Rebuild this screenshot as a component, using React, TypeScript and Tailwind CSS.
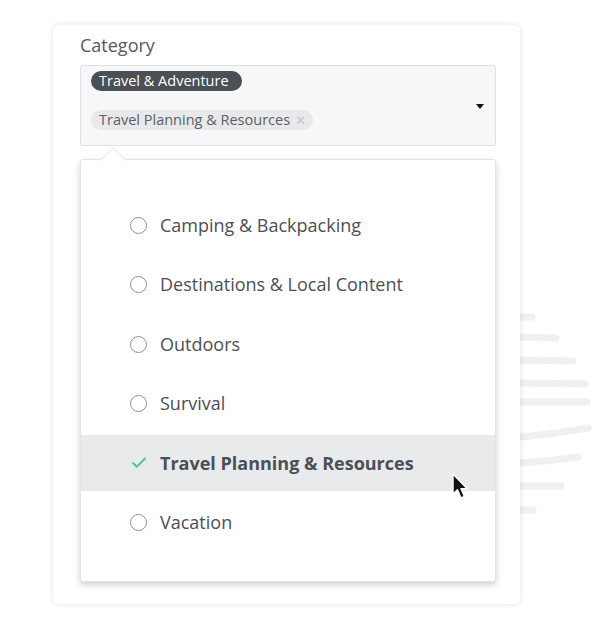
import { Check } from 'lucide-react';

const options = [
  { label: 'Camping & Backpacking', selected: false },
  { label: 'Destinations & Local Content', selected: false },
  { label: 'Outdoors', selected: false },
  { label: 'Survival', selected: false },
  { label: 'Travel Planning & Resources', selected: true },
  { label: 'Vacation', selected: false },
];

// brush strokes peeking out from behind the card
const strokes = [
  'M10 7 L22 7',
  'M10 27 L46 28',
  'M10 50 L63 51',
  'M10 73 L75 74',
  'M10 92 L77 92',
  'M10 127 Q45 124 78 118',
  'M10 153 Q40 151 68 147',
  'M10 176 L51 176',
  'M10 200 L23 200',
];

const Cursor = () => (
  <svg width="18" height="28" viewBox="0 0 18 28" className="absolute left-[370px] top-[313px] z-20">
    <path
      d="M2 1 L2 21 L6.5 16.8 L10 25 L13.4 23.5 L10 15.6 L16 15.6 Z"
      fill="#111"
      stroke="#fff"
      strokeWidth="1.4"
      strokeLinejoin="round"
    />
  </svg>
);

export default function App() {
  return (
    <div className="relative w-[600px] h-[640px] bg-white overflow-hidden" style={{ fontFamily: '"Open Sans", "Noto Sans", sans-serif' }}>
      <svg width="100" height="220" viewBox="0 0 100 220" className="absolute left-[510px] top-[310px]">
        {strokes.map((d, i) => (
          <path key={i} d={d} stroke="#f0f0f0" strokeWidth="7" strokeLinecap="round" fill="none" />
        ))}
      </svg>

      <div className="relative z-10 ml-[53px] mt-[25px] w-[467px] h-[579px] bg-white rounded-md shadow-[0_0_6px_rgba(0,0,0,0.12)] pl-[27px] pr-[24px] pt-[8px]">
        <div className="text-[18px] leading-[24px] text-[#55595f]">Category</div>

        <div className="relative mt-[8px] h-[81px] rounded-[3px] border border-[#dfe1e4] bg-[#f6f7f8] pl-[10px] pt-[5px]">
          <div className="flex">
            <span className="rounded-full bg-[#4b4f56] pl-[8px] pr-[13px] text-[14.5px] leading-[20px] text-white">Travel &amp; Adventure</span>
          </div>
          <div className="mt-[19px] flex">
            <span className="flex items-center gap-[5px] rounded-full bg-[#e8e9eb] pl-[8px] pr-[7px] text-[14.5px] leading-[20px] text-[#5b5f66]">
              Travel Planning &amp; Resources
              <span className="text-[13px] text-[#c5c7cb]">✕</span>
            </span>
          </div>
          <div className="absolute right-[11px] top-[38px] h-0 w-0 border-x-[4px] border-t-[5px] border-x-transparent border-t-[#111]" />
        </div>

        <div className="relative mt-[13px] h-[423px] rounded-[3px] border border-[#e3e4e6] bg-white shadow-[0_3px_6px_rgba(0,0,0,0.18)]">
          <svg width="28" height="14" viewBox="0 0 28 14" className="absolute left-[19px] top-[-13px]">
            <path d="M0 13.5 L13 0.7 L26 13.5" fill="#fff" stroke="#e3e4e6" strokeWidth="1" />
          </svg>
          <div className="flex flex-col gap-[3.6px] pt-[37px]">
            {options.map((o) => (
              <div
                key={o.label}
                className={`flex h-[56px] items-center pl-[49px] ${o.selected ? 'bg-[#e9eaec]' : ''}`}
              >
                {o.selected ? (
                  <Check className="mr-[12px] h-[18px] w-[18px] text-[#5bbf95]" strokeWidth={2.5} />
                ) : (
                  <span className="mr-[13px] h-[17px] w-[17px] rounded-full border-[1.5px] border-[#8e9197]" />
                )}
                <span className={`text-[18px] text-[#4b4f56] ${o.selected ? 'font-bold' : ''}`}>{o.label}</span>
              </div>
            ))}
          </div>
          <Cursor />
        </div>
      </div>
    </div>
  );
}
